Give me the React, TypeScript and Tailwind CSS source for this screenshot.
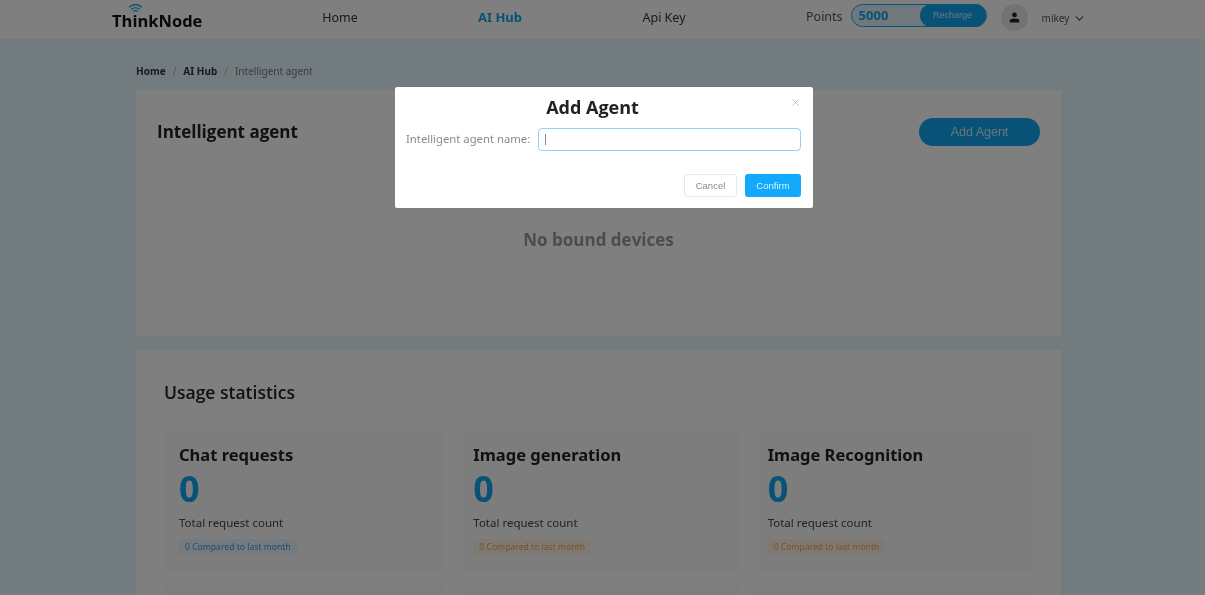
import { ChevronDown, X } from 'lucide-react';

const stats = [
  { title: 'Chat requests', tone: 'blue' },
  { title: 'Image generation', tone: 'orange' },
  { title: 'Image Recognition', tone: 'orange' },
];

const StatCard = ({ title, tone }: { title: string; tone: string }) => (
  <div className="h-[141px] bg-[#fafafa] pl-[15px] pt-[14px]">
    <div className="text-[16.5px] leading-[22px] font-bold text-[#222]">{title}</div>
    <div className="mt-[1px] text-[36px] leading-[44px] font-bold text-[#12a5ee]">0</div>
    <div className="mt-[3px] text-[11.5px] leading-[18px] text-[#444]">Total request count</div>
    <div
      className={
        tone === 'blue'
          ? 'mt-[7px] w-fit rounded-[2px] bg-[#e8f4fc] px-[6px] text-[8.6px] leading-[16px] text-[#3b9ae0]'
          : 'mt-[7px] w-fit rounded-[2px] bg-[#fdf3e6] px-[6px] text-[8.6px] leading-[16px] text-[#eea44a]'
      }
    >
      0 Compared to last month
    </div>
  </div>
);

export default function App() {
  return (
    <div className="relative flex h-[595px] w-[1205px] flex-col overflow-hidden bg-white font-['Noto_Sans',sans-serif] blur-[0.5px]">
      {/* page under the mask */}
      <header className="flex h-[39px] shrink-0 items-center bg-white pl-[112px] pb-[3px]">
        <div className="relative mt-[6px] w-[186px] font-['Open_Sans',sans-serif] text-[16.5px] leading-[20px] font-bold text-[#111]">
          ThinkNode
          <svg viewBox="0 0 16 10" className="absolute top-[-8px] left-[16px] h-[10px] w-[15px]" fill="none" stroke="#1fa8e8" strokeWidth="1.5" strokeLinecap="round">
            <path d="M1.5 4 C5 0.8 11 0.8 14.5 4" />
            <path d="M4 6.2 C6.2 4.4 9.8 4.4 12 6.2" />
            <path d="M6.3 8.4 C7.3 7.6 8.7 7.6 9.7 8.4" />
          </svg>
        </div>
        <div className="flex w-[84px] justify-center text-[12.5px] text-[#333]">Home</div>
        <div className="ml-[76px] flex w-[84px] justify-center text-[13px] font-bold text-[#12a5ee]">AI Hub</div>
        <div className="ml-[80px] flex w-[84px] justify-center text-[12.5px] text-[#333]">Api Key</div>
        <div className="ml-[100px] -mt-[2px] text-[12.5px] text-[#555]">Points</div>
        <div className="ml-[8px] -mt-[5px] flex h-[23px] w-[136px] items-center justify-between rounded-full border border-[#12a5ee] bg-[#e2f1fa]">
          <span className="pl-[7px] text-[13px] font-bold text-[#12a5ee]">5000</span>
          <span className="flex h-[23px] w-[66px] items-center justify-center rounded-full bg-[#12a5ee] font-['Liberation_Sans',sans-serif] text-[9px] text-[#d8f0fc]">
            Recharge
          </span>
        </div>
        <div className="ml-[14px] -mt-[1px] flex h-[27px] w-[27px] items-center justify-center rounded-full bg-[#e6e6e6]">
          <svg viewBox="0 0 12 12" className="h-[11px] w-[11px]" fill="#222">
            <circle cx="6" cy="3.2" r="2.6" />
            <path d="M0.8 11.5 V9.6 C0.8 7.8 3 7 6 7 C9 7 11.2 7.8 11.2 9.6 V11.5 Z" />
          </svg>
        </div>
        <span className="ml-[14px] mt-[1px] text-[10px] text-[#555]">mikey</span>
        <ChevronDown className="ml-[4px] h-[13px] w-[13px] text-[#444]" strokeWidth={2} />
      </header>

      <div className="flex min-h-0 flex-1">
        <main className="flex-1 bg-[#e5f8ff] pl-[136px] pr-[139px]">
          <div className="flex h-[51px] items-center gap-[7px] pt-[13px] text-[10px]">
            <span className="font-bold text-[#334]">Home</span>
            <span className="text-[#aaa]">/</span>
            <span className="font-bold text-[#334]">AI Hub</span>
            <span className="text-[#aaa]">/</span>
            <span className="text-[#778]">Intelligent agent</span>
          </div>

          <section className="h-[246px] bg-white px-[21px] pt-[28px]">
            <div className="flex items-center justify-between">
              <h1 className="font-['Open_Sans',sans-serif] text-[17px] leading-[28px] font-bold text-[#222]">Intelligent agent</h1>
              <button className="h-[28px] w-[121px] rounded-full bg-[#12a5ee] font-['Liberation_Sans',sans-serif] text-[12.5px] text-[#cdeafa]">Add Agent</button>
            </div>
            <div className="mt-[82px] text-center font-['Open_Sans',sans-serif] text-[17px] leading-[24px] font-bold text-[#999]">
              No bound devices
            </div>
          </section>

          <section className="mt-[14px] bg-white px-[28px] pt-[30px] pb-[40px]">
            <h2 className="font-['Open_Sans',sans-serif] text-[17.5px] leading-[24px] font-semibold text-[#222]">Usage statistics</h2>
            <div className="mt-[26px] grid grid-cols-3 gap-x-[14px] gap-y-[14px]">
              {stats.map((s) => (
                <StatCard key={s.title} title={s.title} tone={s.tone} />
              ))}
              <div className="h-[141px] bg-[#fafafa]" />
              <div className="h-[141px] bg-[#fafafa]" />
              <div className="h-[141px] bg-[#fafafa]" />
            </div>
          </section>
        </main>
        <div className="w-[5px] shrink-0 bg-[#eefaff]" />
      </div>

      {/* mask + dialog */}
      <div className="absolute inset-0 flex justify-center bg-black/50 pt-[87px] pl-[3px]">
        <div className="relative h-[121px] w-[418px] rounded-[2px] bg-white pr-[12px] pl-[11px]">
          <h3 className="pt-[9px] pr-[22px] text-center font-['Open_Sans',sans-serif] text-[18px] leading-[22px] font-bold text-[#222]">Add Agent</h3>
          <button className="absolute top-[10px] right-[12px] text-[#a8a8a8]">
            <X className="h-[11px] w-[11px]" strokeWidth={1.5} />
          </button>
          <div className="mt-[10px] flex items-center justify-between">
            <label className="text-[11.3px] text-[#8a8a8a]">Intelligent agent name:</label>
            <div className="flex h-[23px] w-[263px] items-center rounded-[4px] border border-[#8fd3f7] pl-[6px]">
              <span className="h-[11px] w-px bg-[#888]" />
            </div>
          </div>
          <div className="mt-[23px] flex justify-end gap-[8px]">
            <button className="h-[23px] w-[53px] rounded-[3px] border border-[#e8e8e8] pt-px font-['Liberation_Sans',sans-serif] text-[9.5px] text-[#888]">Cancel</button>
            <button className="h-[23px] w-[56px] rounded-[3px] bg-[#12a8fb] pt-px font-['Liberation_Sans',sans-serif] text-[9.5px] text-[#d8f2ff]">Confirm</button>
          </div>
        </div>
      </div>
    </div>
  );
}
